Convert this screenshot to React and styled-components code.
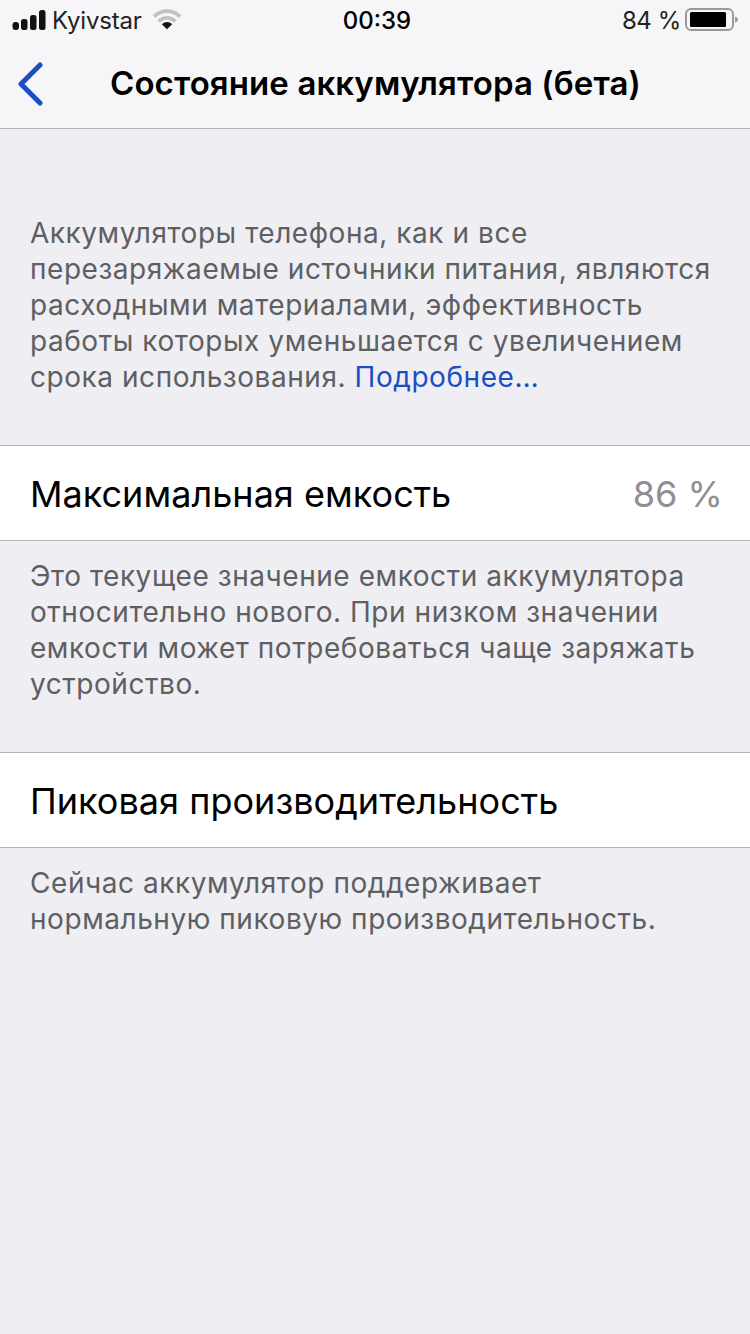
import React from 'react';
import styled, { createGlobalStyle } from 'styled-components';

const GlobalStyle = createGlobalStyle`
  html, body {
    margin: 0;
    padding: 0;
    background: #eeeef3;
    font-family: Inter, Roboto, "Liberation Sans", sans-serif;
  }
`;

const Screen = styled.div`
  width: 750px;
  height: 1334px;
  overflow: hidden;
  background: #eeeef3;
`;

const Header = styled.header`
  height: 128px;
  background: #f6f6f8;
  border-bottom: 1px solid #b2b2b4;
`;

const StatusBar = styled.div`
  height: 40px;
  padding: 0 12px;
  display: grid;
  grid-template-columns: 1fr auto 1fr;
  align-items: center;
  color: #000;
`;

const StatusLeft = styled.div`
  display: flex;
  align-items: center;
  gap: 6px;
`;

const StatusRight = styled.div`
  display: flex;
  align-items: center;
  justify-content: flex-end;
  gap: 4px;
`;

const Carrier = styled.span`
  font-size: 24px;
  letter-spacing: -0.2px;
  color: #222;
`;

const Clock = styled.span`
  margin-left: 4px;
  font-size: 24px;
  font-weight: 500;
`;

const Percent = styled.span`
  font-size: 24px;
  letter-spacing: -0.4px;
  color: #222;
`;

const NavBar = styled.div`
  height: 88px;
  padding-left: 17px;
  display: flex;
  align-items: center;
`;

const BackButton = styled.svg`
  width: 26px;
  height: 44px;
  flex: none;
`;

const Title = styled.h1`
  margin: 0 0 2px 67px;
  font-size: 33px;
  font-weight: 600;
  letter-spacing: 0.1px;
  white-space: nowrap;
  color: #000;
`;

const FooterText = styled.p`
  margin: 0;
  padding: ${(p) => p.$pad || '0 30px'};
  font-size: 28px;
  letter-spacing: 0.55px;
  line-height: 36px;
  color: #5e5e63;
`;

const Link = styled.span`
  color: #1a4fc4;
`;

const Row = styled.div`
  height: 92px;
  padding: 2px 27px 0 30px;
  display: flex;
  align-items: center;
  justify-content: space-between;
  background: #fff;
  border-top: 1px solid #b4b4b6;
  border-bottom: 1px solid #b4b4b6;
  font-size: 36px;
  letter-spacing: 0.03px;
  color: #000;
`;

const RowValue = styled.span`
  color: #8e8e93;
`;

const SignalIcon = () => (
  <svg width="34" height="22" viewBox="0 0 34 22">
    <rect x="0.5" y="13" width="6.5" height="8" rx="3" fill="#111" />
    <rect x="9" y="10" width="6.5" height="11" rx="2.5" fill="#111" />
    <rect x="18" y="6" width="6.5" height="15" rx="2.5" fill="#111" />
    <rect x="27" y="1" width="6.5" height="20" rx="2.5" fill="#111" />
  </svg>
);

const WifiIcon = () => (
  <svg width="28" height="22" viewBox="0 0 30 22" style={{ marginLeft: 5 }}>
    <path d="M1 7.5C9 -0.5 21 -0.5 29 7.5" fill="none" stroke="#c2c2c4" strokeWidth="4" />
    <path d="M6 12.5C11.5 7.5 18.5 7.5 24 12.5" fill="none" stroke="#c2c2c4" strokeWidth="4" />
    <path d="M9.5 15.5C13 12.5 17 12.5 20.5 15.5L15 21Z" fill="#111" />
  </svg>
);

const BatteryIcon = () => (
  <svg width="53" height="24" viewBox="0 0 53 24">
    <rect x="1" y="1" width="47" height="21" rx="5" fill="none" stroke="#9a9a9c" strokeWidth="2" />
    <rect x="5" y="4" width="36" height="15" rx="1.5" fill="#000" />
    <path d="M50 8.5C52 9 53 10 53 11.5C53 13 52 14 50 14.5Z" fill="#9a9a9c" />
  </svg>
);

const App = () => {
  return (
    <Screen>
      <GlobalStyle />
      <Header>
        <StatusBar>
          <StatusLeft>
            <SignalIcon />
            <Carrier>Kyivstar</Carrier>
            <WifiIcon />
          </StatusLeft>
          <Clock>00:39</Clock>
          <StatusRight>
            <Percent>84 %</Percent>
            <BatteryIcon />
          </StatusRight>
        </StatusBar>
        <NavBar>
          <BackButton viewBox="0 0 26 44">
            <path d="M23 3L4 22L23 41" fill="none" stroke="#1a4fc4" strokeWidth="5" strokeLinecap="round" strokeLinejoin="round" />
          </BackButton>
          <Title>Состояние аккумулятора (бета)</Title>
        </NavBar>
      </Header>

      <FooterText $pad="86px 30px 50px">
        Аккумуляторы телефона, как и все<br />
        перезаряжаемые источники питания, являются<br />
        расходными материалами, эффективность<br />
        работы которых уменьшается с увеличением<br />
        срока использования. <Link>Подробнее…</Link>
      </FooterText>

      <Row>
        Максимальная емкость
        <RowValue>86 %</RowValue>
      </Row>
      <FooterText $pad="17px 30px 50px">
        Это текущее значение емкости аккумулятора<br />
        относительно нового. При низком значении<br />
        емкости может потребоваться чаще заряжать<br />
        устройство.
      </FooterText>

      <Row>Пиковая производительность</Row>
      <FooterText $pad="17px 30px 0">
        Сейчас аккумулятор поддерживает<br />
        нормальную пиковую производительность.
      </FooterText>
    </Screen>
  );
};

export default App;
